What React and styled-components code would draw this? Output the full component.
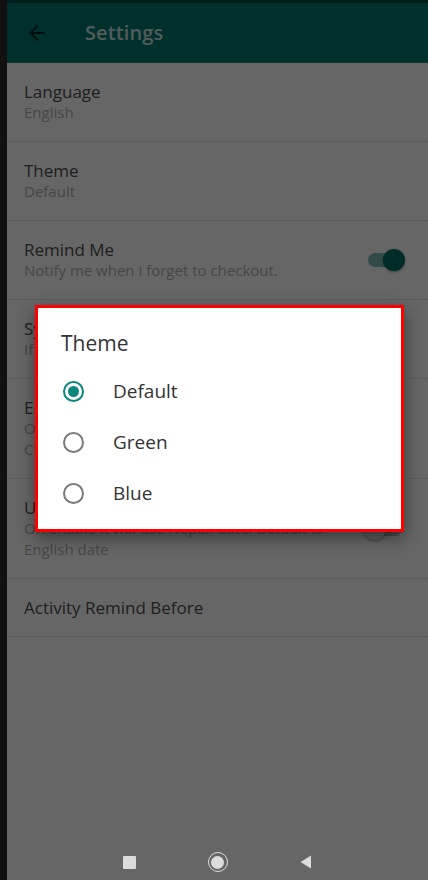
import React from "react";
import styled, { createGlobalStyle } from "styled-components";

const Global = createGlobalStyle`
  html, body { margin: 0; padding: 0; background: #111; }
  body { font-family: "Open Sans", "Noto Sans", sans-serif; }
  * { box-sizing: border-box; }
`;

const Frame = styled.div`
  display: flex;
  width: 428px;
  height: 880px;
  background: #111;
  overflow: hidden;
`;

const Strip = styled.div`
  width: 7px;
  flex: none;
  background: #111;
`;

const Phone = styled.div`
  flex: 1;
  display: flex;
  flex-direction: column;
  background: #666;
`;

const Screen = styled.div`
  position: relative;
  flex: 1;
  display: flex;
  flex-direction: column;
  background: #fff;
`;

const StatusBar = styled.div`
  height: 3px;
  background: #004d45;
`;

const AppBar = styled.header`
  height: 60px;
  display: flex;
  align-items: center;
  background: #00796b;
  border-bottom: 1px solid #2a8479;
  color: #fff;
`;

const BackButton = styled.div`
  width: 60px;
  display: flex;
  justify-content: center;
  color: #002a26;
`;

const AppTitle = styled.h1`
  margin: 0 0 0 18px;
  font-size: 20px;
  font-weight: 600;
  color: rgba(255, 255, 255, 0.82);
  letter-spacing: 0.1px;
`;

const List = styled.div`
  display: flex;
  flex-direction: column;
`;

const Row = styled.div`
  display: flex;
  align-items: center;
  gap: 24px;
  padding: 18px 24px 18px 17px;
  border-bottom: 1px solid #e9e9e9;
`;

const Texts = styled.div`
  flex: 1;
  min-width: 0;
  display: flex;
  flex-direction: column;
`;

const Title = styled.div`
  font-size: 17px;
  line-height: 21px;
  color: #4e4e4e;
`;

const Subtitle = styled.div`
  font-size: 15px;
  line-height: 21px;
  color: #b0b0b0;
`;

const Switch = styled.div`
  position: relative;
  width: 36px;
  height: 20px;
  flex: none;
`;

const Track = styled.div`
  position: absolute;
  left: 0;
  right: 2px;
  top: 3px;
  height: 14px;
  border-radius: 7px;
  background: ${(p) => (p.$on ? "rgba(0,121,107,0.5)" : "#bdbdbd")};
`;

const Thumb = styled.div`
  position: absolute;
  top: -1px;
  ${(p) => (p.$on ? "right: -1px;" : "left: -4px;")}
  width: 22px;
  height: 22px;
  border-radius: 50%;
  background: ${(p) => (p.$on ? "#006f62" : "#f1f1f1")};
  box-shadow: 0 1px 3px rgba(0, 0, 0, 0.4);
`;

const Scrim = styled.div`
  position: absolute;
  inset: 0;
  background: rgba(0, 0, 0, 0.6);
  display: flex;
  align-items: center;
  justify-content: center;
  padding: 0 24px 0 28px;
`;

const Dialog = styled.div`
  width: 369px;
  background: #fff;
  border: 3px solid #ff0000;
  box-shadow: 0 6px 16px rgba(0, 0, 0, 0.45);
  padding: 21px 0 10px;
  display: flex;
  flex-direction: column;
`;

const DialogTitle = styled.div`
  font-size: 21px;
  line-height: 28px;
  color: #333;
  padding-left: 23px;
  margin-bottom: 9px;
`;

const Option = styled.div`
  height: 51px;
  display: flex;
  align-items: center;
  padding-left: 25px;
  gap: 29px;
  font-size: 19px;
  color: #333;
`;

const Radio = styled.div`
  width: 21px;
  height: 21px;
  border-radius: 50%;
  border: 2px solid ${(p) => (p.$checked ? "#0b877c" : "#7a7a7a")};
  display: flex;
  align-items: center;
  justify-content: center;
  flex: none;
  &::after {
    content: "";
    width: 11px;
    height: 11px;
    border-radius: 50%;
    background: ${(p) => (p.$checked ? "#0b877c" : "transparent")};
  }
`;

const NavBar = styled.nav`
  height: 44px;
  display: flex;
  align-items: center;
  justify-content: center;
  gap: 64px;
  padding-top: 8px;
  background: #666;
`;

const NavSlot = styled.div`
  width: 24px;
  height: 24px;
  display: flex;
  align-items: center;
  justify-content: center;
`;

const NavSquare = styled.div`
  width: 13px;
  height: 13px;
  border-radius: 1px;
  background: #dcdcdc;
`;

const NavCircle = styled.div`
  width: 20px;
  height: 20px;
  border-radius: 50%;
  border: 1.5px solid #dcdcdc;
  display: flex;
  align-items: center;
  justify-content: center;
  &::after {
    content: "";
    width: 13px;
    height: 13px;
    border-radius: 50%;
    background: #dcdcdc;
  }
`;

const rows = [
  { title: "Language", sub: "English" },
  { title: "Theme", sub: "Default" },
  { title: "Remind Me", sub: "Notify me when i forget to checkout.", toggle: true, on: true },
  { title: "Sync Data", sub: "If enabled data will be synced." },
  { title: "Enable Location", sub: "On enable it will use your location when Checkin and Checkout." },
  { title: "Use Nepali Date", sub: "On enable it will use Nepali date. Default is English date", toggle: true, on: false },
  { title: "Activity Remind Before" },
];

const options = ["Default", "Green", "Blue"];

export default function App() {
  return (
    <>
      <Global />
      <Frame>
        <Strip />
        <Phone>
          <Screen>
            <StatusBar />
            <AppBar>
              <BackButton>
                <svg width="24" height="24" viewBox="0 0 24 24" fill="currentColor">
                  <path d="M20 11H7.83l5.59-5.59L12 4l-8 8 8 8 1.41-1.41L7.83 13H20v-2z" />
                </svg>
              </BackButton>
              <AppTitle>Settings</AppTitle>
            </AppBar>
            <List>
              {rows.map((r) => (
                <Row key={r.title}>
                  <Texts>
                    <Title>{r.title}</Title>
                    {r.sub && <Subtitle>{r.sub}</Subtitle>}
                  </Texts>
                  {r.toggle && (
                    <Switch>
                      <Track $on={r.on} />
                      <Thumb $on={r.on} />
                    </Switch>
                  )}
                </Row>
              ))}
            </List>
            <Scrim>
              <Dialog>
                <DialogTitle>Theme</DialogTitle>
                {options.map((o, i) => (
                  <Option key={o}>
                    <Radio $checked={i === 0} />
                    {o}
                  </Option>
                ))}
              </Dialog>
            </Scrim>
          </Screen>
          <NavBar>
            <NavSlot><NavSquare /></NavSlot>
            <NavSlot><NavCircle /></NavSlot>
            <NavSlot>
              <svg width="14" height="16" viewBox="0 0 14 16">
                <path d="M12 1.5v13L1.5 8z" fill="#dcdcdc" />
              </svg>
            </NavSlot>
          </NavBar>
        </Phone>
      </Frame>
    </>
  );
}
